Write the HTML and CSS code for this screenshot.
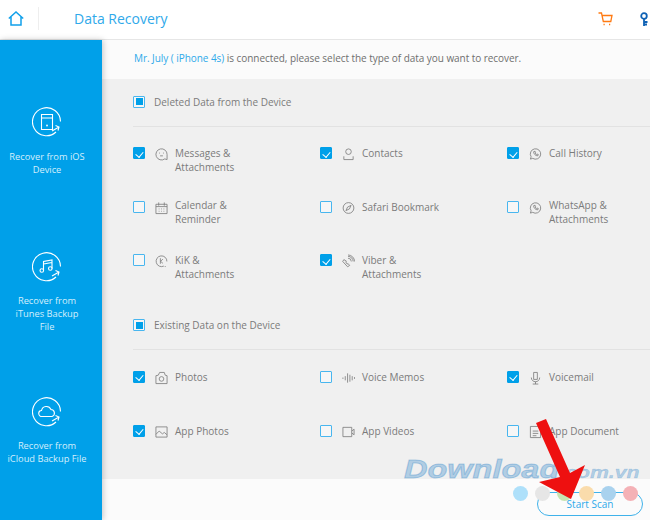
FILE: index.html
```html
<!DOCTYPE html>
<html lang="en">
<head>
<meta charset="utf-8">
<title>Data Recovery</title>
<link rel="stylesheet" href="styles.css">
</head>
<body>
<div class="app">
  <header class="topbar">
    <div class="home">
      <svg width="16" height="15" viewBox="0 0 16 15" class="line-blue"><path d="M.8 7.500 8 1l7.200 6.500M3 6v8h10V6"/></svg>
    </div>
    <h1 class="title">Data Recovery</h1>
    <div class="tools">
      <svg width="15" height="14" viewBox="0 0 15 14" class="line-orange"><path d="M.5 1h3l1.800 8.500h7.500L14 3.500H4"/><path d="M5.500 12.500h1.200M11 12.500h1.200"/></svg>
      <svg width="9" height="15" viewBox="0 0 9 15" class="line-key"><circle cx="4" cy="4" r="2.800"/><path d="M4 7v7M4 10h3.500M4 12.500h3"/></svg>
    </div>
  </header>
  <div class="body">
    <nav class="side">
      <div class="side-item first">
        <svg width="30" height="30" viewBox="0 0 30 30" class="line-white"><path d="M24 25A14 14 0 1 1 28.500 14.500"/><path d="M9.500 7.500h11v15h-11zM9.500 11h11"/><path d="M20 24l7-4M23.500 18.500l3.500 1.500-1 3.500"/><circle cx="15" cy="18.500" r=".4"/></svg>
        <span>Recover from iOS<br>Device</span>
      </div>
      <div class="side-item">
        <svg width="30" height="30" viewBox="0 0 30 30" class="line-white"><path d="M24 25A14 14 0 1 1 28.500 14.500"/><path d="M11.500 18.500V9.500l8.500-1.500V16.500M11.500 12l8.500-1.500"/><circle cx="9.800" cy="18.500" r="1.800"/><circle cx="18.300" cy="16.500" r="1.800"/><path d="M20 24l7-4M23.500 18.500l3.500 1.500-1 3.500"/></svg>
        <span>Recover from<br>iTunes Backup<br>File</span>
      </div>
      <div class="side-item">
        <svg width="30" height="30" viewBox="0 0 30 30" class="line-white"><path d="M24 25A14 14 0 1 1 28.500 14.500"/><path d="M10 19.500a3 3 0 0 1-.5-6 5 5 0 0 1 9.500-1 3.600 3.600 0 0 1 1 7z"/><path d="M20 24l7-4M23.500 18.500l3.500 1.500-1 3.500"/></svg>
        <span>Recover from<br>iCloud Backup File</span>
      </div>
    </nav>
    <main class="main">
      <p class="intro"><a class="device">Mr. July ( iPhone 4s)</a> is connected, please select the type of data you want to recover.</p>
      <div class="content">
        <section class="group">
          <div class="group-head"><i class="box partial"></i><span>Deleted Data from the Device</span></div>
          <div class="grid">
            <div class="opt"><i class="box on"></i><svg class="ico" width="13" height="14" viewBox="0 0 14 14"><path d="M10.500 12.300A6 6 0 1 1 13 7.500V13z"/><path d="M4.500 6h.9M8.600 6h.9M5.500 9h3"/></svg><span>Messages &amp; Attachments</span></div>
            <div class="opt"><i class="box on"></i><svg class="ico" width="13" height="14" viewBox="0 0 14 14"><circle cx="7" cy="4.500" r="3"/><path d="M2 9.500v3.500h10V9.500"/></svg><span>Contacts</span></div>
            <div class="opt"><i class="box on"></i><svg class="ico" width="13" height="14" viewBox="0 0 14 14"><path d="M1.500 12.500l.8-2.500A5.600 5.600 0 1 1 4 11.700z"/><path d="M5 4.500c0 2.500 2 4.500 4.500 4.500l.5-1.500-1.500-.5-.5.500-1.500-1.500.5-.5L6.500 4z"/></svg><span>Call History</span></div>
            <div class="opt"><i class="box"></i><svg class="ico" width="13" height="14" viewBox="0 0 14 14"><path d="M1 3h12v10H1zM1 5.500h12M4 1v3.500M10 1v3.500M4 8h.8M6.600 8h.8M9.200 8h.8M4 10.500h.8M6.600 10.500h.8M9.200 10.500h.8"/></svg><span class="up">Calendar &amp; Reminder</span></div>
            <div class="opt"><i class="box"></i><svg class="ico" width="13" height="14" viewBox="0 0 14 14"><circle cx="7" cy="7" r="5.800"/><path d="M9.800 4.200 8 8 4.200 9.800 6 6z"/></svg><span>Safari Bookmark</span></div>
            <div class="opt"><i class="box"></i><svg class="ico" width="13" height="14" viewBox="0 0 14 14"><path d="M1.500 12.500l.8-2.500A5.600 5.600 0 1 1 4 11.700z"/><path d="M5 4.500c0 2.500 2 4.500 4.500 4.500l.5-1.500-1.500-.5-.5.500-1.500-1.500.5-.5L6.500 4z"/></svg><span class="up">WhatsApp &amp; Attachments</span></div>
            <div class="opt"><i class="box"></i><svg class="ico" width="13" height="14" viewBox="0 0 14 14"><path d="M9.500 12.500A5.800 5.800 0 1 1 12.800 7.500"/><path d="M5.800 4v6M8.500 5 6 7.300 8.500 9.500M11 12.500v1"/></svg><span>KiK &amp; Attachments</span></div>
            <div class="opt"><i class="box on"></i><svg class="ico" width="13" height="14" viewBox="0 0 14 14"><path d="M2 5.500.8 7.500 6 13.200l2.200-1.400-1.600-2-1 .5L4 8l.8-.8z"/><path d="M6.500 4a3.500 3.500 0 0 1 3.500 3.500M6.500 2a5.500 5.500 0 0 1 5.500 5.500M6.500.5a7 7 0 0 1 7 7"/></svg><span>Viber &amp; Attachments</span></div>
          </div>
        </section>
        <section class="group group-two">
          <div class="group-head"><i class="box partial"></i><span>Existing Data on the Device</span></div>
          <div class="grid grid-two">
            <div class="opt"><i class="box on"></i><svg class="ico" width="13" height="14" viewBox="0 0 14 14"><path d="M1 13V4.500L3.500 4 5 1h5l1 3 2 .5V13z"/><circle cx="7" cy="8" r="2.500"/></svg><span>Photos</span></div>
            <div class="opt"><i class="box"></i><svg class="ico" width="13" height="14" viewBox="0 0 14 14"><path d="M1 6.500v1.500M3.500 5v4.500M6 2v10M8.500 3.500v7.500M11 5v4.500M13.500 6v2"/></svg><span>Voice Memos</span></div>
            <div class="opt"><i class="box on"></i><svg class="ico" width="13" height="14" viewBox="0 0 14 14"><path d="M5 1h4v7.500H5zM2.500 6.500c0 6 9 6 9 0M7 11v2.500M4 13.500h6"/></svg><span>Voicemail</span></div>
            <div class="opt"><i class="box on"></i><svg class="ico" width="13" height="14" viewBox="0 0 14 14"><path d="M1 1.500h12v11H1zM1 9.500 4.500 6 8 9l2-1.500 3 2.500"/></svg><span>App Photos</span></div>
            <div class="opt"><i class="box"></i><svg class="ico" width="13" height="14" viewBox="0 0 14 14"><path d="M1 2h9.500v10H1zM13 4v6M10.500 6 13 4M10.500 8 13 10"/></svg><span>App Videos</span></div>
            <div class="opt"><i class="box"></i><svg class="ico" width="13" height="14" viewBox="0 0 14 14"><path d="M1.500 1h8L12.500 4v9h-11zM4 6h6M4 8.500h6M4 11h4"/></svg><span>App Document</span></div>
          </div>
        </section>
      </div>
      <footer class="footer">
        <button class="scan">Start Scan</button>
      </footer>
    </main>
  </div>
  <div class="watermark">Download<small>.com.vn</small></div>
  <div class="dots"><i class="d1"></i><i class="d2"></i><i class="d3"></i><i class="d4"></i><i class="d5"></i><i class="d6"></i></div>
  <svg class="arrow" width="60" height="90" viewBox="0 0 60 90"><path d="M1 4 11 0 35 54 50 46 36 80 4 63 25 58z"/></svg>
</div>
</body>
</html>
```
FILE: styles.css
```css
* { box-sizing: border-box; }
html, body { margin: 0; height: 100%; overflow: hidden; }
body { font-family: "Open Sans", "Liberation Sans", sans-serif; font-size: 10px; color: #7b7b7b; }
.app { position: relative; width: 650px; height: 520px; overflow: hidden; display: flex; flex-direction: column; background: #fff; }

.topbar { height: 40px; flex: none; display: flex; align-items: center; background: #fff; border-bottom: 1px solid #e6e6e6; }
.home { width: 39px; height: 23px; margin-top: -3px; border-right: 1px solid #eeeeee; display: flex; align-items: center; padding-left: 8px; }
.line-blue { fill: none; stroke: #11a0ea; stroke-width: 1.500; }
.title { margin: -2px 0 0 35px; font-size: 14px; font-weight: 400; color: #2fa9ea; flex: 1; }
.tools { display: flex; align-items: center; gap: 27px; width: 52px; flex: none; margin-top: -1px; }
.line-orange { fill: none; stroke: #ff7a12; stroke-width: 1.300; flex: none; }
.line-key { fill: none; stroke: #0f62b5; stroke-width: 1.800; flex: none; }

.body { flex: 1; display: flex; min-height: 0; }
.side { width: 102px; flex: none; background: #00a0e9; color: #d4effc; padding-top: 67px; display: flex; flex-direction: column; box-shadow: 1px 0 6px rgba(0,0,0,.22); position: relative; text-align: center; }
.side-item { height: 145px; flex: none; display: flex; flex-direction: column; align-items: center; padding: 0 9px 0 1px; }
.side-item:last-child { height: auto; }
.side-item span { margin-top: 12px; line-height: 13px; font-size: 9.300px; white-space: nowrap; }
.side-item.first span { margin-top: 13px; }
.line-white { fill: none; stroke: #fff; stroke-width: 1.100; flex: none; }

.main { flex: 1; display: flex; flex-direction: column; min-width: 0; }
.intro { margin: 0; height: 39px; flex: none; background: #fbfbfb; padding: 12px 0 0 32px; line-height: 13px; color: #6f6f6f; font-size: 10px; letter-spacing: -.05px; }
.device { color: #2fa9ea; }
.content { flex: 1; min-height: 0; background: #f0f0f0; padding: 16px 0 0 31px; }
.group-head { display: flex; align-items: center; gap: 9px; height: 13px; margin-bottom: 18px; }
.grid { border-top: 1px solid #e2e2e2; padding-top: 20px; display: grid; grid-template-columns: repeat(3, 187px); grid-auto-rows: 53.500px; }
.group-two { margin-top: 11px; }
.group-two .group-head { margin-bottom: 17px; }
.grid-two { grid-auto-rows: 54px; padding-top: 21px; }
.opt { display: flex; align-items: flex-start; line-height: 13.500px; }
.opt span { margin-left: 7px; width: 85px; }
.opt span.up { margin-top: -1.500px; }
.ico { flex: none; margin: 0 0 0 10px; fill: none; stroke: #7d7d7d; stroke-width: .9; }
.box { flex: none; width: 12px; height: 12px; border: 1px solid #48b6ef; border-radius: 1px; background: #f6f6f6; position: relative; display: block; }
.box.on { background: #00a0e9; border-color: #00a0e9; }
.box.on::after { content: ""; position: absolute; left: 3px; top: 1.500px; width: 3.500px; height: 6px; border: solid #fff; border-width: 0 1.600px 1.600px 0; transform: rotate(40deg); }
.box.partial::after { content: ""; position: absolute; inset: 1.500px; background: #00a0e9; }

.footer { height: 41px; flex: none; background: #fbfbfb; display: flex; justify-content: flex-end; align-items: flex-start; padding: 13px 7px 0 0; }
.scan { width: 106px; height: 24px; border: 1px solid #3fb2ea; border-radius: 12px; background: transparent; color: #2fa9ea; font: 10px "Open Sans", sans-serif; padding: 0; }

.watermark { position: absolute; left: 404px; top: 452px; font-family: "Liberation Sans", sans-serif; font-weight: 700; font-style: italic; font-size: 26px; line-height: 34px; color: rgba(40,130,200,.33); -webkit-text-stroke: 1px rgba(40,130,200,.33); white-space: nowrap; transform: scaleX(1.25); transform-origin: left top; pointer-events: none; }
.watermark small { font-size: 17px; font-weight: 700; -webkit-text-stroke: .4px rgba(40,130,200,.33); }
.dots { position: absolute; left: 513px; top: 486px; display: flex; gap: 7px; }
.dots i { width: 15px; height: 15px; border-radius: 50%; display: block; }
.d1 { background: #aee0fa; }
.d2 { background: #e6e6e6; }
.d3 { background: #c6e4b2; }
.d4 { background: #fadcac; }
.d5 { background: #a9d2ee; }
.d6 { background: #f4b1b6; }
.arrow { position: absolute; left: 535px; top: 419px; }
.arrow path { fill: #ee1010; }
```
